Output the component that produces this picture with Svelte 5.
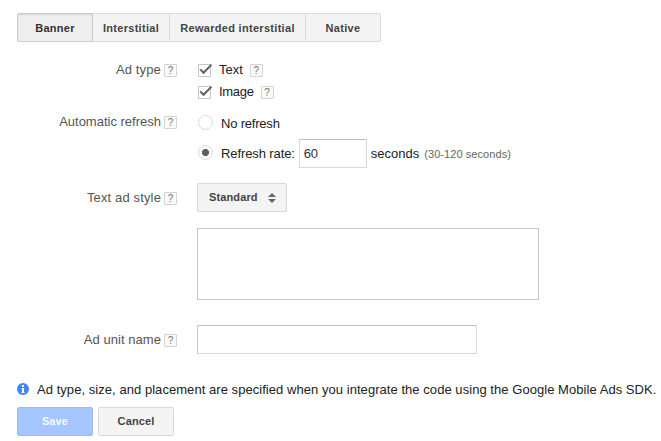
<script>
  const tabs = [
    { name: 'Banner', width: 76 },
    { name: 'Interstitial', width: 78 },
    { name: 'Rewarded interstitial', width: 137 },
    { name: 'Native', width: 76 }
  ];
  let active = $state('Banner');
  let rate = $state('60');
  let unitName = $state('');
</script>

{#snippet help()}
  <span class="help">?</span>
{/snippet}

{#snippet check()}
  <svg class="check" width="16" height="16" viewBox="0 0 16 16">
    <path d="M1.5 2.5h12v12h-12z" fill="#fff" stroke="#c6c6c6" />
    <path d="M3.2 7.4l3.4 3.4 7.9-8.2" fill="none" stroke="#606060" stroke-width="2" />
  </svg>
{/snippet}

<main>
  <nav>
    {#each tabs as tab}
      <button class="tab" class:active={active === tab.name} style:width="{tab.width}px" onclick={() => (active = tab.name)}>{tab.name}</button>
    {/each}
  </nav>

  <section class="row types">
    <div class="label"><span class="type-label">Ad type</span>{@render help()}</div>
    <div class="field">
      <div class="option">{@render check()}<span class="text-option">Text</span>{@render help()}</div>
      <div class="option">{@render check()}<span class="image-option">Image</span>{@render help()}</div>
    </div>
  </section>

  <section class="row refresh">
    <div class="label"><span>Automatic refresh</span>{@render help()}</div>
    <div class="field">
      <div class="option none"><span class="radio"></span><span class="no-refresh">No refresh</span></div>
      <div class="option timed">
        <span class="radio on"></span><span class="rate-label">Refresh rate:</span>
        <input class="rate" bind:value={rate} />
        <span class="seconds">seconds</span><small>(30-120 seconds)</small>
      </div>
    </div>
  </section>

  <section class="row style">
    <div class="label"><span class="style-label">Text ad style</span>{@render help()}</div>
    <div class="field">
      <button class="select"><span>Standard</span>
        <svg width="8" height="10" viewBox="0 0 8 10"><path d="M4 0l4 4H0zM0 6h8l-4 4z" fill="#666" /></svg>
      </button>
      <div class="preview"></div>
    </div>
  </section>

  <section class="row unit">
    <div class="label"><span class="unit-label">Ad unit name</span>{@render help()}</div>
    <div class="field"><input class="name" bind:value={unitName} /></div>
  </section>

  <div class="note">
    <svg width="12" height="12" viewBox="0 0 12 12">
      <circle cx="6" cy="6" r="6" fill="#4285f4" />
      <path d="M5 2h2v2H5zM4.5 5H7v4h.5v1h-3V9H5V6h-.5z" fill="#fff" />
    </svg>
    <span>Ad type, size, and placement are specified when you integrate the code using the Google Mobile Ads SDK.</span>
  </div>

  <footer>
    <button class="save">Save</button>
    <button class="cancel">Cancel</button>
  </footer>
</main>

<style>
  :global(body) {
    margin: 0;
    background: #fff;
  }
  main {
    box-sizing: border-box;
    height: 441px;
    overflow: hidden;
    padding: 13px 0 0 17px;
    font: 13px/22px 'Liberation Sans', Arial, sans-serif;
    color: #222;
    white-space: nowrap;
  }
  button {
    box-sizing: border-box;
    height: 29px;
    padding: 0;
    border: 1px solid #d9d9d9;
    border-radius: 2px;
    background: #f4f4f4;
    color: #444;
    font: bold 11px/27px 'Liberation Sans', Arial, sans-serif;
    letter-spacing: 0.12px;
  }
  nav {
    display: flex;
  }
  .tab {
    flex: none;
    border-radius: 0;
    padding-top: 1px;
    letter-spacing: 0.3px;
  }
  .tab + .tab {
    margin-left: -1px;
  }
  .tab:first-child {
    border-radius: 2px 0 0 2px;
  }
  .tab:last-child {
    border-radius: 0 2px 2px 0;
  }
  .tab.active {
    position: relative;
    background: #eee;
    border-color: #ccc;
    color: #333;
    box-shadow: inset 0 1px 2px rgba(0, 0, 0, 0.1);
  }
  .row {
    display: flex;
    gap: 20px;
  }
  .types {
    margin-top: 17px;
  }
  .refresh {
    margin-top: 8px;
  }
  .style {
    margin-top: 15px;
  }
  .unit {
    margin-top: 25px;
  }
  .label {
    display: flex;
    align-items: center;
    justify-content: flex-end;
    width: 160px;
    height: 22px;
    color: #555;
  }
  .style .label,
  .unit .label {
    height: 29px;
  }
  .type-label,
  .style-label {
    letter-spacing: 0.14px;
  }
  .unit-label {
    letter-spacing: 0.05px;
  }
  .help {
    box-sizing: border-box;
    flex: none;
    width: 13px;
    height: 13px;
    margin: 1px 0 0 3px;
    border: 1px solid #d4d4d4;
    border-radius: 1px;
    background: #fafafa;
    color: #777;
    font-size: 10px;
    line-height: 11px;
    text-align: center;
  }
  .option {
    display: flex;
    align-items: center;
    height: 22px;
  }
  .option .help {
    margin: 1px 0 0 7px;
  }
  .image-option {
    letter-spacing: -0.3px;
  }
  .check {
    flex: none;
    margin-right: 6px;
  }
  .radio {
    box-sizing: border-box;
    flex: none;
    width: 15px;
    height: 15px;
    margin: 0 8px 0 1px;
    border: 1px solid #d9d9d9;
    border-radius: 50%;
  }
  .radio.on {
    margin-bottom: 2px;
    background: radial-gradient(circle, #606060 3.2px, transparent 3.9px);
  }
  .no-refresh {
    margin-top: 3px;
    letter-spacing: -0.2px;
  }
  .rate-label {
    letter-spacing: -0.1px;
  }
  .timed {
    height: 29px;
    margin-top: 6px;
  }
  input {
    box-sizing: border-box;
    height: 29px;
    padding: 0 4px;
    border: 1px solid #d9d9d9;
    border-top-color: #c0c0c0;
    border-radius: 0;
    outline: 0;
    background: #fff;
    color: #333;
    font: 13px 'Liberation Sans', Arial, sans-serif;
  }
  .rate {
    width: 68px;
    margin: 0 4px;
    letter-spacing: -0.3px;
  }
  small {
    margin-left: 5px;
    color: #666;
    font-size: 11px;
    letter-spacing: 0.07px;
  }
  .select {
    display: flex;
    align-items: center;
    justify-content: space-between;
    width: 90px;
    padding: 0 10px 0 11px;
  }
  .preview {
    box-sizing: border-box;
    width: 342px;
    height: 72px;
    margin-top: 16px;
    border: 1px solid #c6c6c6;
  }
  .name {
    display: block;
    width: 280px;
    border-left-color: #c9c9c9;
  }
  .note {
    display: flex;
    align-items: center;
    gap: 8px;
    height: 22px;
    margin-top: 24px;
  }
  .note svg {
    flex: none;
  }
  .note span {
    margin-top: 2px;
    letter-spacing: 0.05px;
  }
  footer {
    display: flex;
    gap: 5px;
    margin-top: 7px;
  }
  footer button {
    width: 76px;
  }
  .save {
    border-color: #98bcfb;
    background: #a6c6ff;
    color: #f5f9ff;
  }
</style>
